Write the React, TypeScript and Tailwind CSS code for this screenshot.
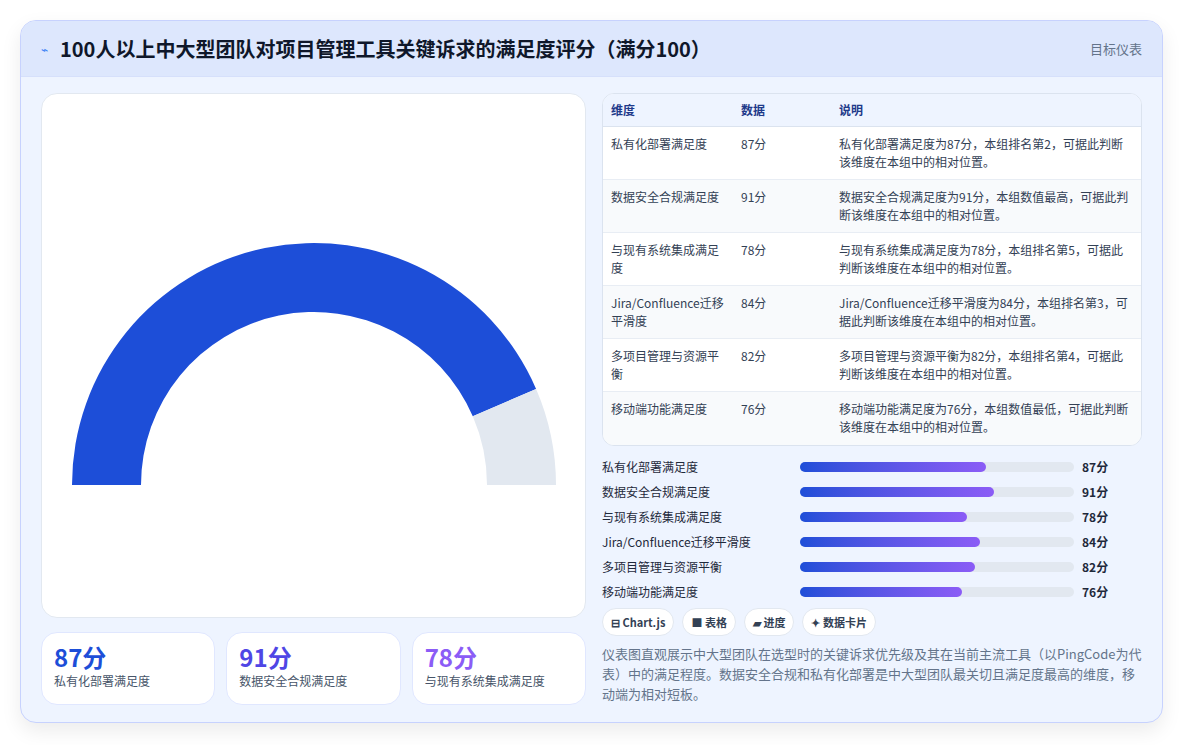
const rows = [
  { name: "私有化部署满足度", v: 87, note: "私有化部署满足度为87分，本组排名第2，可据此判断该维度在本组中的相对位置。" },
  { name: "数据安全合规满足度", v: 91, note: "数据安全合规满足度为91分，本组数值最高，可据此判断该维度在本组中的相对位置。" },
  { name: "与现有系统集成满足度", v: 78, note: "与现有系统集成满足度为78分，本组排名第5，可据此判断该维度在本组中的相对位置。" },
  { name: "Jira/Confluence迁移平滑度", v: 84, note: "Jira/Confluence迁移平滑度为84分，本组排名第3，可据此判断该维度在本组中的相对位置。" },
  { name: "多项目管理与资源平衡", v: 82, note: "多项目管理与资源平衡为82分，本组排名第4，可据此判断该维度在本组中的相对位置。" },
  { name: "移动端功能满足度", v: 76, note: "移动端功能满足度为76分，本组数值最低，可据此判断该维度在本组中的相对位置。" },
];

function arc(cx: number, cy: number, ro: number, ri: number, a0: number, a1: number) {
  const p = (r: number, a: number) => [cx + r * Math.cos(a), cy - r * Math.sin(a)];
  const [x0, y0] = p(ro, a0);
  const [x1, y1] = p(ro, a1);
  const [x2, y2] = p(ri, a1);
  const [x3, y3] = p(ri, a0);
  return `M${x0} ${y0} A${ro} ${ro} 0 0 1 ${x1} ${y1} L${x2} ${y2} A${ri} ${ri} 0 0 0 ${x3} ${y3} Z`;
}

function Gauge() {
  const cx = 272, cy = 391, ro = 242, ri = 173;
  const mid = Math.PI - 0.87 * Math.PI;
  return (
    <svg width="544" height="524" viewBox="0 0 544 524">
      <path d={arc(cx, cy, ro, ri, Math.PI, mid)} fill="#1d4ed8" />
      <path d={arc(cx, cy, ro, ri, mid, 0)} fill="#e2e8f0" />
    </svg>
  );
}

export default function App() {
  return (
    <div className="w-[1183px] h-[745px] bg-white p-5 pb-0" style={{ fontFamily: '"Noto Sans CJK SC", "Noto Sans", sans-serif' }}>
      <div className="h-[703px] rounded-2xl border border-[#c7d2fe] bg-[#eef4ff] overflow-hidden shadow-[0_8px_20px_rgba(0,0,0,0.08)]">
        <div className="h-[56px] bg-[#dde7fd] flex items-center justify-between px-5 border-b border-[#d6e0fb]">
          <div className="flex items-center gap-3">
            <span className="text-[#3b82f6] text-xs">⌁</span>
            <h1 className="text-[20px] font-bold text-[#0f172a]">100人以上中大型团队对项目管理工具关键诉求的满足度评分（满分100）</h1>
          </div>
          <span className="text-[13px] text-[#64748b]">目标仪表</span>
        </div>
        <div className="flex gap-4 p-5 pt-4">
          <div className="w-[545px] flex flex-col gap-[14px]">
            <div className="h-[525px] bg-white rounded-2xl border border-[#e2e8f0]">
              <Gauge />
            </div>
            <div className="grid grid-cols-3 gap-[11px]">
              {[["87分", "#1d4ed8", "私有化部署满足度"], ["91分", "#4f46e5", "数据安全合规满足度"], ["78分", "#8b5cf6", "与现有系统集成满足度"]].map(([v, c, l]) => (
                <div key={l} className="h-[73px] rounded-2xl bg-white border border-[#e0e7ff] px-3 pt-2">
                  <div className="text-[24px] font-bold leading-8" style={{ color: c }}>{v}</div>
                  <div className="text-xs text-[#475569]">{l}</div>
                </div>
              ))}
            </div>
          </div>
          <div className="flex-1 flex flex-col">
            <div className="rounded-xl border border-[#dbe3ef] bg-white overflow-hidden text-xs">
              <div className="flex h-[33px] items-center bg-[#eef4ff] text-[#1e3a8a] font-semibold border-b border-[#dbe3ef]">
                <div className="w-[138px] pl-2">维度</div><div className="w-[98px]">数据</div><div className="flex-1">说明</div>
              </div>
              {rows.map((r, i) => (
                <div key={r.name} className={`flex h-[53px] pt-2 text-[#334155] leading-[18px] ${i % 2 ? "bg-[#f8fafc]" : "bg-white"} ${i < 5 ? "border-b border-[#e8edf4]" : ""}`}>
                  <div className="w-[138px] pl-2 pr-3">{r.name}</div>
                  <div className="w-[98px]">{r.v}分</div>
                  <div className="flex-1 pr-2">{r.note}</div>
                </div>
              ))}
            </div>
            <div className="mt-[8px] flex flex-col">
              {rows.map((r) => (
                <div key={r.name} className="h-[25px] flex items-center text-xs text-[#1e293b]">
                  <div className="w-[198px]">{r.name}</div>
                  <div className="w-[274px] h-[10px] rounded-full bg-[#e2e8f0]">
                    <div className="h-full rounded-full bg-gradient-to-r from-[#1d4ed8] to-[#8b5cf6]" style={{ width: `${r.v * 0.78}%` }} />
                  </div>
                  <div className="ml-2 font-semibold">{r.v}分</div>
                </div>
              ))}
            </div>
            <div className="flex gap-2 mt-1">
              {["⊟ Chart.js", "■ 表格", "▰ 进度", "✦ 数据卡片"].map((t) => (
                <span key={t} className="h-[28px] px-2 flex items-center rounded-full bg-white border border-[#e2e8f0] text-[11px] font-semibold text-[#334155]">{t}</span>
              ))}
            </div>
            <p className="mt-2 text-[13px] leading-5 text-[#64748b]">仪表图直观展示中大型团队在选型时的关键诉求优先级及其在当前主流工具（以PingCode为代表）中的满足程度。数据安全合规和私有化部署是中大型团队最关切且满足度最高的维度，移动端为相对短板。</p>
          </div>
        </div>
      </div>
    </div>
  );
}
